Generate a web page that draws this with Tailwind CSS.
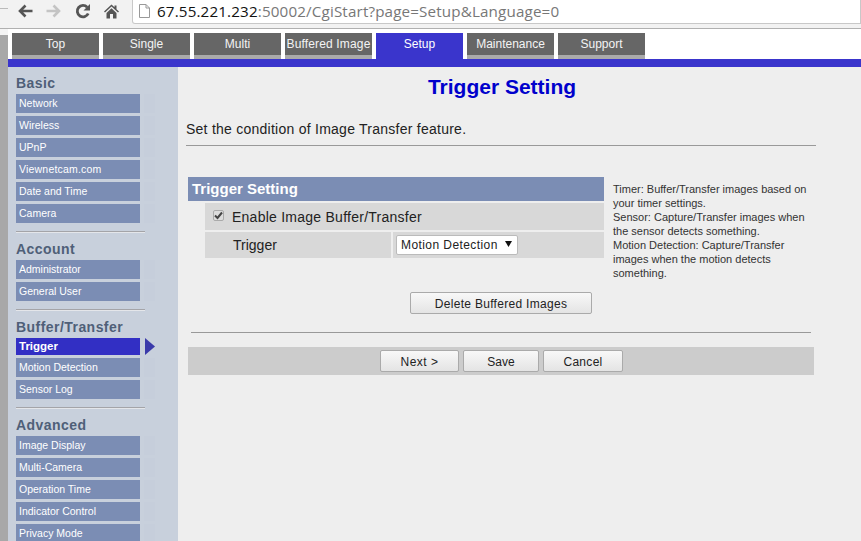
<!DOCTYPE html>
<html>
<head>
<meta charset="utf-8">
<script src="https://cdn.jsdelivr.net/npm/@tailwindcss/browser@4"></script>
</head>
<body class="m-0 w-[861px] h-[541px] overflow-hidden bg-white font-['Liberation_Sans',Arial,sans-serif]">
<!-- browser bar -->
<div class="h-[29px] bg-[#f2f2f2] border-b border-[#b0b0b0] flex items-start relative">
  <div class="absolute left-0 top-[8px] w-[8px] h-px bg-[#bbbbbb]"></div>
  <div class="flex items-center h-[22px] ml-[17px] gap-[13px] w-[115px] shrink-0">
    <svg width="16" height="16" viewBox="0 0 16 16" fill="none" stroke="#555" stroke-width="2.6"><path d="M15.500 8H3M8.500 2.500 3 8l5.500 5.500"/></svg>
    <svg width="16" height="16" viewBox="0 0 16 16" fill="none" stroke="#c4c4c4" stroke-width="2.6"><path d="M.5 8H13M7.500 2.500 13 8l-5.500 5.500"/></svg>
    <svg width="16" height="16" viewBox="0 0 16 16" fill="none" stroke="#555" stroke-width="2.8"><path d="M13.200 10.500A5.700 5.700 0 1 1 12.200 4.300"/><path d="M15 1v6.500H8.500z" fill="#555" stroke="none"/></svg>
    <svg width="15" height="15" viewBox="0 0 15 15" fill="#555"><path d="M7.500 .5 0 7.500l1 1 6.500-6 6.500 6 1-1-2.500-2.300V1.500h-2v1.800z"/><path d="M2.500 9 7.500 4.300l5 4.700v5.500H9V10H6v4.500H2.500z"/></svg>
  </div>
  <div class="h-[24px] flex-1 bg-white border border-t-0 border-[#c8c8c8] rounded-bl-[3px] flex items-center pl-[6px]">
    <svg class="mb-[1px]" width="11" height="14" viewBox="0 0 11 14" fill="#fff" stroke="#999"><path d="M.5.500h6.500l3.500 3.500v9.500H.5z"/><path d="M7 .500V4h3.500" fill="none"/></svg>
    <span class="ml-[7px] mb-[1px] text-[15.200px] leading-[22px] tracking-[0.15px] text-[#777] whitespace-nowrap font-['Open_Sans',sans-serif]"><span class="text-[#111]">67.55.221.232</span>:50002/CgiStart?page=Setup&amp;Language=0</span>
  </div>
</div>
<div class="flex h-[512px]">
  <div class="w-[8px] shrink-0 flex flex-col">
    <div class="h-[6px] bg-[#f4f4f4]"></div>
    <div class="flex-1 bg-[#a8a8a8]"></div>
  </div>
  <div class="flex-1 flex flex-col min-w-0">
    <!-- tabs -->
    <div class="h-[30px] bg-white flex items-end gap-[4px] pl-[4px] shrink-0">
      <div class="w-[87px] h-[26px] bg-[#666666] border-b-4 border-[#aaaaaa] text-[#f4f4f4] text-[12px] text-center leading-[22px]">Top</div>
      <div class="w-[87px] h-[26px] bg-[#666666] border-b-4 border-[#aaaaaa] text-[#f4f4f4] text-[12px] text-center leading-[22px]">Single</div>
      <div class="w-[87px] h-[26px] bg-[#666666] border-b-4 border-[#aaaaaa] text-[#f4f4f4] text-[12px] text-center leading-[22px]">Multi</div>
      <div class="w-[87px] h-[26px] bg-[#666666] border-b-4 border-[#aaaaaa] text-[#f4f4f4] text-[12px] text-center leading-[22px] whitespace-nowrap tracking-[0.15px]">Buffered Image</div>
      <div class="w-[87px] h-[26px] bg-[#3a35cc] text-white text-[12px] text-center leading-[22px]">Setup</div>
      <div class="w-[87px] h-[26px] bg-[#666666] border-b-4 border-[#aaaaaa] text-[#f4f4f4] text-[12px] text-center leading-[22px]">Maintenance</div>
      <div class="w-[87px] h-[26px] bg-[#666666] border-b-4 border-[#aaaaaa] text-[#f4f4f4] text-[12px] text-center leading-[22px]">Support</div>
    </div>
    <div class="h-[8px] bg-[#3a35cc] shrink-0"></div>
    <div class="flex flex-1 min-h-0">
      <!-- sidebar -->
      <aside class="w-[170px] shrink-0 bg-[#c8d0dc] pl-[8px] pt-[8px] overflow-hidden text-[10.500px] text-white">
        <h3 class="text-[14px] leading-[16px] font-bold text-[#4f5f78] tracking-[0.45px] h-[19px]">Basic</h3>
        <div class="flex flex-col gap-[3px] w-[124px]">
          <div class="relative h-[19px] bg-[#7b8db4] pl-[3px] leading-[18px] after:absolute after:left-[128px] after:top-0 after:w-[11px] after:h-full after:bg-[#c6cedb]">Network</div>
          <div class="relative h-[19px] bg-[#7b8db4] pl-[3px] leading-[18px] after:absolute after:left-[128px] after:top-0 after:w-[11px] after:h-full after:bg-[#c6cedb]">Wireless</div>
          <div class="relative h-[19px] bg-[#7b8db4] pl-[3px] leading-[18px] after:absolute after:left-[128px] after:top-0 after:w-[11px] after:h-full after:bg-[#c6cedb]">UPnP</div>
          <div class="relative h-[19px] bg-[#7b8db4] pl-[3px] leading-[18px] tracking-[0.2px] after:absolute after:left-[128px] after:top-0 after:w-[11px] after:h-full after:bg-[#c6cedb]">Viewnetcam.com</div>
          <div class="relative h-[19px] bg-[#7b8db4] pl-[3px] leading-[18px] after:absolute after:left-[128px] after:top-0 after:w-[11px] after:h-full after:bg-[#c6cedb]">Date and Time</div>
          <div class="relative h-[19px] bg-[#7b8db4] pl-[3px] leading-[18px] after:absolute after:left-[128px] after:top-0 after:w-[11px] after:h-full after:bg-[#c6cedb]">Camera</div>
        </div>
        <div class="w-[129px] h-[2px] bg-[#a4a4a8] border-b border-[#e4e6ea] mt-[8px] mb-[8px]"></div>
        <h3 class="text-[14px] leading-[16px] font-bold text-[#4f5f78] tracking-[0.45px] h-[19px]">Account</h3>
        <div class="flex flex-col gap-[3px] w-[124px]">
          <div class="relative h-[19px] bg-[#7b8db4] pl-[3px] leading-[18px] after:absolute after:left-[128px] after:top-0 after:w-[11px] after:h-full after:bg-[#c6cedb]">Administrator</div>
          <div class="relative h-[19px] bg-[#7b8db4] pl-[3px] leading-[18px] after:absolute after:left-[128px] after:top-0 after:w-[11px] after:h-full after:bg-[#c6cedb]">General User</div>
        </div>
        <div class="w-[129px] h-[2px] bg-[#a4a4a8] border-b border-[#e4e6ea] mt-[8px] mb-[8px]"></div>
        <h3 class="text-[14px] leading-[16px] font-bold text-[#4f5f78] tracking-[0.45px] h-[19px]">Buffer/Transfer</h3>
        <div class="flex flex-col gap-[3px] w-[124px] relative">
          <div class="h-[17px] bg-[#322fc4] pl-[3px] text-[11.500px] leading-[16px] font-bold text-white">Trigger</div>
          <svg class="absolute left-[129px] top-[0px]" width="10" height="17" viewBox="0 0 10 17" fill="#3a3aaa"><path d="M0 0l10 8.500L0 17z"/></svg>
          <div class="relative h-[19px] bg-[#7b8db4] pl-[3px] leading-[18px] after:absolute after:left-[128px] after:top-0 after:w-[11px] after:h-full after:bg-[#c6cedb]">Motion Detection</div>
          <div class="relative h-[19px] bg-[#7b8db4] pl-[3px] leading-[18px] after:absolute after:left-[128px] after:top-0 after:w-[11px] after:h-full after:bg-[#c6cedb]">Sensor Log</div>
        </div>
        <div class="w-[129px] h-[2px] bg-[#a4a4a8] border-b border-[#e4e6ea] mt-[8px] mb-[8px]"></div>
        <h3 class="text-[14px] leading-[16px] font-bold text-[#4f5f78] tracking-[0.45px] h-[19px]">Advanced</h3>
        <div class="flex flex-col gap-[3px] w-[124px]">
          <div class="relative h-[19px] bg-[#7b8db4] pl-[3px] leading-[18px] after:absolute after:left-[128px] after:top-0 after:w-[11px] after:h-full after:bg-[#c6cedb]">Image Display</div>
          <div class="relative h-[19px] bg-[#7b8db4] pl-[3px] leading-[18px] after:absolute after:left-[128px] after:top-0 after:w-[11px] after:h-full after:bg-[#c6cedb]">Multi-Camera</div>
          <div class="relative h-[19px] bg-[#7b8db4] pl-[3px] leading-[18px] after:absolute after:left-[128px] after:top-0 after:w-[11px] after:h-full after:bg-[#c6cedb]">Operation Time</div>
          <div class="relative h-[19px] bg-[#7b8db4] pl-[3px] leading-[18px] after:absolute after:left-[128px] after:top-0 after:w-[11px] after:h-full after:bg-[#c6cedb]">Indicator Control</div>
          <div class="relative h-[19px] bg-[#7b8db4] pl-[3px] leading-[18px] after:absolute after:left-[128px] after:top-0 after:w-[11px] after:h-full after:bg-[#c6cedb]">Privacy Mode</div>
        </div>
      </aside>
      <!-- main -->
      <main class="flex-1 bg-[#eeeeee] min-w-0">
        <h1 class="w-[648px] text-center text-[21px] leading-[24px] font-bold text-[#0000cc] pt-[8px] box-content">Trigger Setting</h1>
        <p class="text-[14px] leading-[18px] tracking-[0.25px] text-[#222] ml-[8px] mt-[21px]">Set the condition of Image Transfer feature.</p>
        <div class="w-[630px] h-px bg-[#999] ml-[8px] mt-[7px]"></div>
        <div class="flex ml-[10px] mt-[31px]">
          <div class="w-[416px] shrink-0">
            <div class="h-[24px] bg-[#7b8db4] text-white font-bold text-[15px] leading-[23px] pl-[4px]">Trigger Setting</div>
            <div class="ml-[17px] mt-[2px] h-[27px] bg-[#d8d8d8] flex items-center pl-[8px] pt-[2px] text-[14px] tracking-[0.25px] text-[#222]">
              <span class="w-[11px] h-[11px] rounded-[2px] bg-[#dcdcdc] border border-[#aaa] flex items-center justify-center mr-[8px] mb-[4px]"><svg width="9" height="9" viewBox="0 0 9 9" fill="none" stroke="#444" stroke-width="2"><path d="M1 4.500 3.500 7 8 1.500"/></svg></span>
              Enable Image Buffer/Transfer
            </div>
            <div class="ml-[17px] mt-[2px] h-[26px] flex gap-[2px]">
              <div class="w-[186px] bg-[#d8d8d8] pl-[28px] text-[14px] leading-[26px] text-[#222]">Trigger</div>
              <div class="flex-1 bg-[#d8d8d8] pl-[3px] pt-[3px]">
                <div class="w-[122px] h-[20px] bg-white border border-[#bbb] rounded-[2px] text-[12px] leading-[18px] tracking-[0.42px] text-[#222] pl-[4px] whitespace-nowrap flex items-center">Motion Detection<svg class="ml-[7px] mb-[2px]" width="7" height="6" viewBox="0 0 7 6" fill="#111"><path d="M0 0h7L3.500 6z"/></svg></div>
              </div>
            </div>
          </div>
          <div class="ml-[9px] w-[200px] mt-[5px] text-[11px] leading-[14px] text-[#333]">Timer: Buffer/Transfer images based on your timer settings.<br>Sensor: Capture/Transfer images when the sensor detects something.<br>Motion Detection: Capture/Transfer images when the motion detects something.</div>
        </div>
        <button class="block w-[182px] h-[22px] ml-[232px] mt-[12px] pt-[1px] bg-[linear-gradient(#f8f8f8,#e4e4e4)] border border-[#aaa] rounded-[2px] text-[12px] text-[#222] tracking-[0.3px]">Delete Buffered Images</button>
        <div class="w-[620px] h-px bg-[#999] ml-[13px] mt-[18px]"></div>
        <div class="w-[626px] h-[28px] bg-[#cccccc] ml-[10px] mt-[14px] flex items-start justify-center gap-[4px] pt-[3px] pl-[1px]">
          <button class="w-[79px] h-[22px] pt-[1px] bg-[linear-gradient(#f8f8f8,#e4e4e4)] border border-[#aaa] rounded-[2px] text-[12px] tracking-[0.5px] text-[#222]">Next &gt;</button>
          <button class="w-[76px] h-[22px] pt-[1px] bg-[linear-gradient(#f8f8f8,#e4e4e4)] border border-[#aaa] rounded-[2px] text-[12px] text-[#222]">Save</button>
          <button class="w-[80px] h-[22px] pt-[1px] bg-[linear-gradient(#f8f8f8,#e4e4e4)] border border-[#aaa] rounded-[2px] text-[12px] tracking-[0.3px] text-[#222]">Cancel</button>
        </div>
      </main>
    </div>
  </div>
</div>
</body>
</html>
